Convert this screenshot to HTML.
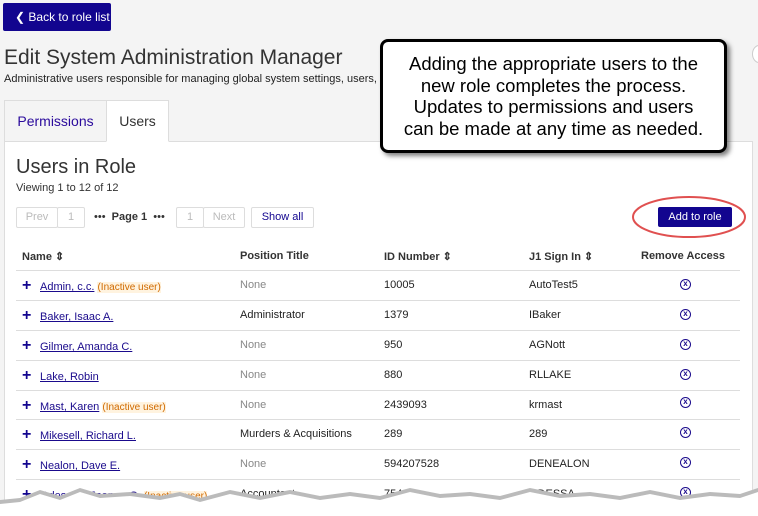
<!DOCTYPE html>
<html><head><style>
*{margin:0;padding:0;box-sizing:border-box}
html,body{width:758px;height:516px;overflow:hidden}
body{background:#f4f4f4;font-family:"Liberation Sans",sans-serif;position:relative;color:#222}
.abs{position:absolute}
.back{left:3px;top:3px;width:108px;height:28px;background:#12058f;border-radius:2px;color:#fff;font-size:12px;line-height:28px;padding-left:12px}
h1{position:absolute;left:4px;top:46px;font-size:21px;font-weight:normal;color:#333}
.sub{left:4px;top:73px;font-size:11px;color:#222}
.tab{top:100px;height:42px;border:1px solid #ddd;font-size:14px;line-height:40px;text-align:center}
.panel{left:4px;top:141px;width:749px;height:375px;background:#fff;border:1px solid #ddd;border-bottom:none}
.pg{top:207px;height:21px;border:1px solid #ddd;border-radius:2px;font-size:11px;line-height:19px;text-align:center;color:#bbb;background:#fff}
.hd{top:250px;font-size:11px;font-weight:bold;color:#333}
.line{left:16px;width:724px;height:1px;background:#ddd}
.row{font-size:11px;color:#222}
.name{color:#1a0a8c;text-decoration:underline}
.inact{color:#d06a00;background:#fff3df;font-size:10px}
.none{color:#888}
.plus{font-weight:bold;color:#12058f;font-size:16px;display:inline-block;width:18px}
.x{width:11px;height:11px;border:1.5px solid #1a0a8c;border-radius:50%;font-size:8px;line-height:8px;text-align:center;color:#1a0a8c;font-weight:bold}
</style></head><body>
<div class="abs back">&#10094; Back to role list</div>
<h1>Edit System Administration Manager</h1>
<div class="abs sub">Administrative users responsible for managing global system settings, users, and</div>
<div class="abs tab" style="left:4px;width:103px;color:#2a0a9c;background:#f4f4f4">Permissions</div>
<div class="abs panel"></div>
<div class="abs tab" style="left:106px;width:63px;background:#fff;border-bottom-color:#fff;color:#333">Users</div>
<div class="abs" style="left:16px;top:156px;font-size:20px;color:#333">Users in Role</div>
<div class="abs" style="left:16px;top:182px;font-size:11px;color:#333">Viewing 1 to 12 of 12</div>
<div class="abs pg" style="left:16px;width:42px">Prev</div>
<div class="abs pg" style="left:57px;width:28px">1</div>
<div class="abs" style="left:94px;top:211px;font-size:11px;color:#333">•••&nbsp; <b>Page 1</b> &nbsp;•••</div>
<div class="abs pg" style="left:176px;width:28px">1</div>
<div class="abs pg" style="left:203px;width:42px">Next</div>
<div class="abs pg" style="left:251px;width:63px;color:#12058f">Show all</div>
<div class="abs" style="left:658px;top:207px;width:74px;height:20px;background:#12058f;border-radius:2px;color:#fff;font-size:11px;line-height:20px;text-align:center">Add to role</div>
<svg class="abs" style="left:630px;top:195px" width="120" height="46"><ellipse cx="59" cy="22" rx="56" ry="20" fill="none" stroke="#e05050" stroke-width="2"/></svg>
<div class="abs hd" style="left:22px">Name &#8661;</div>
<div class="abs hd" style="left:240px">Position Title</div>
<div class="abs hd" style="left:384px">ID Number &#8661;</div>
<div class="abs hd" style="left:529px">J1 Sign In &#8661;</div>
<div class="abs hd" style="left:641px">Remove Access</div>
<div class="abs line" style="top:270px"></div>
<div class="abs line" style="top:300px"></div>
<div class="abs line" style="top:330px"></div>
<div class="abs line" style="top:360px"></div>
<div class="abs line" style="top:390px"></div>
<div class="abs line" style="top:419px"></div>
<div class="abs line" style="top:449px"></div>
<div class="abs line" style="top:479px"></div>
<div class="abs row" style="left:22px;top:277px"><span class="plus">+</span><span class="name">Admin, c.c.</span> <span class="inact">(Inactive user)</span></div>
<div class="abs row none" style="left:240px;top:279px">None</div><div class="abs row" style="left:384px;top:279px">10005</div><div class="abs row" style="left:529px;top:279px">AutoTest5</div><div class="abs x" style="left:680px;top:279px">x</div>
<div class="abs row" style="left:22px;top:307px"><span class="plus">+</span><span class="name">Baker, Isaac A.</span></div>
<div class="abs row" style="left:240px;top:309px">Administrator</div><div class="abs row" style="left:384px;top:309px">1379</div><div class="abs row" style="left:529px;top:309px">IBaker</div><div class="abs x" style="left:680px;top:309px">x</div>
<div class="abs row" style="left:22px;top:337px"><span class="plus">+</span><span class="name">Gilmer, Amanda C.</span></div>
<div class="abs row none" style="left:240px;top:339px">None</div><div class="abs row" style="left:384px;top:339px">950</div><div class="abs row" style="left:529px;top:339px">AGNott</div><div class="abs x" style="left:680px;top:339px">x</div>
<div class="abs row" style="left:22px;top:367px"><span class="plus">+</span><span class="name">Lake, Robin</span></div>
<div class="abs row none" style="left:240px;top:369px">None</div><div class="abs row" style="left:384px;top:369px">880</div><div class="abs row" style="left:529px;top:369px">RLLAKE</div><div class="abs x" style="left:680px;top:369px">x</div>
<div class="abs row" style="left:22px;top:397px"><span class="plus">+</span><span class="name">Mast, Karen</span> <span class="inact">(Inactive user)</span></div>
<div class="abs row none" style="left:240px;top:399px">None</div><div class="abs row" style="left:384px;top:399px">2439093</div><div class="abs row" style="left:529px;top:399px">krmast</div><div class="abs x" style="left:680px;top:397px">x</div>
<div class="abs row" style="left:22px;top:426px"><span class="plus">+</span><span class="name">Mikesell, Richard L.</span></div>
<div class="abs row" style="left:240px;top:428px">Murders &amp; Acquisitions</div><div class="abs row" style="left:384px;top:428px">289</div><div class="abs row" style="left:529px;top:428px">289</div><div class="abs x" style="left:680px;top:427px">x</div>
<div class="abs row" style="left:22px;top:456px"><span class="plus">+</span><span class="name">Nealon, Dave E.</span></div>
<div class="abs row none" style="left:240px;top:458px">None</div><div class="abs row" style="left:384px;top:458px">594207528</div><div class="abs row" style="left:529px;top:458px">DENEALON</div><div class="abs x" style="left:680px;top:457px">x</div>
<div class="abs row" style="left:22px;top:486px"><span class="plus">+</span><span class="name">Odesson, Joanna G.</span> <span class="inact">(Inactive user)</span></div>
<div class="abs row" style="left:240px;top:488px">Accountant</div><div class="abs row" style="left:384px;top:488px">754</div><div class="abs row" style="left:529px;top:488px">ODESSA</div><div class="abs x" style="left:680px;top:487px">x</div>
<svg class="abs" style="left:0;top:480px" width="758" height="36">
<polygon points="0,20 20,18 40,10 60,16 80,8 100,14 130,12 160,16 180,12 200,18 230,10 260,16 290,10 320,16 350,12 380,16 410,8 440,14 470,12 500,16 530,8 560,14 590,12 620,16 650,10 680,16 710,12 740,14 758,8 758,36 0,36" fill="#bbb"/>
<polygon points="0,24 20,22 40,14 60,20 80,12 100,18 130,16 160,20 180,16 200,22 230,14 260,20 290,14 320,20 350,16 380,20 410,12 440,18 470,16 500,20 530,12 560,18 590,16 620,20 650,14 680,20 710,16 740,18 758,12 758,36 0,36" fill="#fff"/>
</svg>
<div class="abs" style="left:380px;top:39px;width:347px;height:114px;background:#fff;border:3px solid #000;border-radius:8px;box-shadow:3px 3px 5px rgba(0,0,0,.5);font-size:18.5px;line-height:21.5px;text-align:center;padding-top:11px;color:#000;white-space:nowrap">Adding the appropriate users to the<br>new role completes the process.<br>Updates to permissions and users<br>can be made at any time as needed.</div>
<div class="abs" style="left:752px;top:45px;width:14px;height:18px;border:1px solid #ccc;border-radius:50%;background:#fff"></div>
</body></html>
